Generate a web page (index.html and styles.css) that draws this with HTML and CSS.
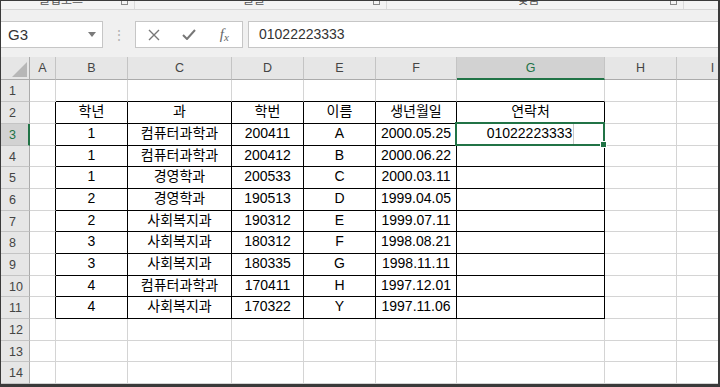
FILE: index.html
```html
<!DOCTYPE html>
<html lang="ko">
<head>
    <meta charset="UTF-8">
    <title>학생 명단</title>
    <link rel="stylesheet" href="styles.css">
</head>
<body>
    <div class="window">
        <div class="ribbon">
            <div class="group g1"><span class="glabel">클립보드</span><span class="launcher"></span></div>
            <div class="group g2"><span class="glabel">글꼴</span><span class="launcher"></span></div>
            <div class="group g3"><span class="glabel">맞춤</span><span class="launcher"></span></div>
        </div>

        <div class="formula-bar">
            <div class="namebox">
                <span>G3</span>
                <svg class="dd" width="8" height="5" viewBox="0 0 8 5"><path d="M0 0h8L4 5z" fill="#7a7a7a"/></svg>
            </div>
            <div class="grip">⋮</div>
            <div class="fx-buttons">
                <span class="btn">
                    <svg width="12" height="12" viewBox="0 0 12 12"><path d="M1 1l10 10M11 1L1 11" stroke="#777" stroke-width="1.4"/></svg>
                </span>
                <span class="btn">
                    <svg width="14" height="11" viewBox="0 0 14 11"><path d="M1 6l4 4L13 1" stroke="#777" stroke-width="2" fill="none"/></svg>
                </span>
                <span class="btn fx"><i>f</i><i class="x">x</i></span>
            </div>
            <div class="formula-input">01022223333</div>
        </div>

        <div class="sheet">
            <!-- 열 머리글 -->
            <div class="c corner"><svg width="15" height="15" viewBox="0 0 15 15"><path d="M15 0v15H0z" fill="#b7b7b7"/></svg></div>
            <div class="c ch">A</div>
            <div class="c ch">B</div>
            <div class="c ch">C</div>
            <div class="c ch">D</div>
            <div class="c ch">E</div>
            <div class="c ch">F</div>
            <div class="c ch sel">G</div>
            <div class="c ch">H</div>
            <div class="c ch">I</div>

            <!-- 1 -->
            <div class="c rh">1</div>
            <div class="c"></div>
            <div class="c tb"></div>
            <div class="c tb"></div>
            <div class="c tb"></div>
            <div class="c tb"></div>
            <div class="c tb"></div>
            <div class="c tb"></div>
            <div class="c"></div>
            <div class="c"></div>

            <!-- 2 -->
            <div class="c rh">2</div>
            <div class="c lb"></div>
            <div class="c d">학년</div>
            <div class="c d">과</div>
            <div class="c d">학번</div>
            <div class="c d">이름</div>
            <div class="c d">생년월일</div>
            <div class="c d">연락처</div>
            <div class="c"></div>
            <div class="c"></div>

            <!-- 3 -->
            <div class="c rh sel">3</div>
            <div class="c lb"></div>
            <div class="c d">1</div>
            <div class="c d">컴퓨터과학과</div>
            <div class="c d">200411</div>
            <div class="c d">A</div>
            <div class="c d">2000.05.25</div>
            <div class="c d active"><span class="val">01022223333</span></div>
            <div class="c"></div>
            <div class="c"></div>

            <!-- 4 -->
            <div class="c rh">4</div>
            <div class="c lb"></div>
            <div class="c d">1</div>
            <div class="c d">컴퓨터과학과</div>
            <div class="c d">200412</div>
            <div class="c d">B</div>
            <div class="c d">2000.06.22</div>
            <div class="c d"></div>
            <div class="c"></div>
            <div class="c"></div>

            <!-- 5 -->
            <div class="c rh">5</div>
            <div class="c lb"></div>
            <div class="c d">1</div>
            <div class="c d">경영학과</div>
            <div class="c d">200533</div>
            <div class="c d">C</div>
            <div class="c d">2000.03.11</div>
            <div class="c d"></div>
            <div class="c"></div>
            <div class="c"></div>

            <!-- 6 -->
            <div class="c rh">6</div>
            <div class="c lb"></div>
            <div class="c d">2</div>
            <div class="c d">경영학과</div>
            <div class="c d">190513</div>
            <div class="c d">D</div>
            <div class="c d">1999.04.05</div>
            <div class="c d"></div>
            <div class="c"></div>
            <div class="c"></div>

            <!-- 7 -->
            <div class="c rh">7</div>
            <div class="c lb"></div>
            <div class="c d">2</div>
            <div class="c d">사회복지과</div>
            <div class="c d">190312</div>
            <div class="c d">E</div>
            <div class="c d">1999.07.11</div>
            <div class="c d"></div>
            <div class="c"></div>
            <div class="c"></div>

            <!-- 8 -->
            <div class="c rh">8</div>
            <div class="c lb"></div>
            <div class="c d">3</div>
            <div class="c d">사회복지과</div>
            <div class="c d">180312</div>
            <div class="c d">F</div>
            <div class="c d">1998.08.21</div>
            <div class="c d"></div>
            <div class="c"></div>
            <div class="c"></div>

            <!-- 9 -->
            <div class="c rh">9</div>
            <div class="c lb"></div>
            <div class="c d">3</div>
            <div class="c d">사회복지과</div>
            <div class="c d">180335</div>
            <div class="c d">G</div>
            <div class="c d">1998.11.11</div>
            <div class="c d"></div>
            <div class="c"></div>
            <div class="c"></div>

            <!-- 10 -->
            <div class="c rh">10</div>
            <div class="c lb"></div>
            <div class="c d">4</div>
            <div class="c d">컴퓨터과학과</div>
            <div class="c d">170411</div>
            <div class="c d">H</div>
            <div class="c d">1997.12.01</div>
            <div class="c d"></div>
            <div class="c"></div>
            <div class="c"></div>

            <!-- 11 -->
            <div class="c rh">11</div>
            <div class="c lb"></div>
            <div class="c d">4</div>
            <div class="c d">사회복지과</div>
            <div class="c d">170322</div>
            <div class="c d">Y</div>
            <div class="c d">1997.11.06</div>
            <div class="c d"></div>
            <div class="c"></div>
            <div class="c"></div>

            <!-- 12 ~ 14 -->
            <div class="c rh">12</div>
            <div class="c"></div><div class="c"></div><div class="c"></div><div class="c"></div>
            <div class="c"></div><div class="c"></div><div class="c"></div><div class="c"></div><div class="c"></div>

            <div class="c rh">13</div>
            <div class="c"></div><div class="c"></div><div class="c"></div><div class="c"></div>
            <div class="c"></div><div class="c"></div><div class="c"></div><div class="c"></div><div class="c"></div>

            <div class="c rh">14</div>
            <div class="c"></div><div class="c"></div><div class="c"></div><div class="c"></div>
            <div class="c"></div><div class="c"></div><div class="c"></div><div class="c"></div><div class="c"></div>
        </div>
    </div>
</body>
</html>
```

FILE: styles.css
```css
* {
    box-sizing: border-box;
}

body {
    margin: 0;
    font-family: "Liberation Sans", "Noto Sans CJK KR", sans-serif;
    background: #fff;
}

.window {
    width: 720px;
    height: 387px;
    border: solid #3a3a3a;
    border-width: 1px 2px 3px 1px;
    background: #f0f0f0;
    overflow: hidden;
}

/* 리본 아래쪽 (잘린 그룹 이름) */
.ribbon {
    height: 9px;
    display: flex;
    background: #f3f3f3;
    border-bottom: 1px solid #d6d6d6;
    overflow: hidden;
}

.group {
    display: flex;
    align-items: flex-start;
    border-right: 1px solid #dadada;
}

.g1 { width: 134px; }
.g2 { width: 252px; }
.g3 { width: 297px; }

.glabel {
    flex: 1;
    text-align: center;
    font-family: "Noto Sans CJK KR", sans-serif;
    font-size: 12px;
    line-height: 12px;
    margin-top: -8px;
    color: #555;
}

.launcher {
    width: 7px;
    height: 7px;
    border: 1px solid #8a8a8a;
    margin: -3px 6px 0 0;
}

/* 수식 입력줄 */
.formula-bar {
    height: 47px;
    display: flex;
    align-items: flex-start;
    padding-top: 11px;
}

.namebox {
    width: 102px;
    height: 27px;
    background: #fff;
    border: 1px solid #c6c6c6;
    border-left: none;
    display: flex;
    align-items: center;
    justify-content: space-between;
    padding: 0 6px 0 7px;
    font-size: 15px;
    color: #333;
}

.grip {
    width: 32px;
    height: 27px;
    display: flex;
    align-items: center;
    justify-content: center;
    color: #b4b4b4;
    font-size: 14px;
}

.fx-buttons {
    width: 108px;
    height: 27px;
    display: flex;
    background: #fff;
    border: 1px solid #c6c6c6;
}

.btn {
    width: 36px;
    display: flex;
    align-items: center;
    justify-content: center;
}

.fx {
    font-family: "Liberation Serif", serif;
    color: #666;
    font-size: 15px;
}

.fx .x {
    font-size: 11px;
    margin-top: 4px;
}

.formula-input {
    flex: 1;
    height: 27px;
    margin-left: 5px;
    background: #fff;
    border: 1px solid #c6c6c6;
    border-right: none;
    padding-left: 10px;
    font-size: 14px;
    line-height: 25px;
    color: #333;
}

/* 시트 */
.sheet {
    display: grid;
    grid-template-columns: 29px 26px 72px 104px 72px 72px 81px 148px 72px 72px;
    grid-template-rows: 23px 22px 22px 22px 21px 22px 22px 21px 22px 22px 21px 22px 22px 21px 22px;
    background: #fff;
}

.c {
    border-right: 1px solid #d4d4d4;
    border-bottom: 1px solid #d4d4d4;
    display: flex;
    align-items: center;
    justify-content: center;
    font-size: 14px;
    line-height: 18px;
    padding-bottom: 3px;
    color: #000;
    white-space: nowrap;
    overflow: hidden;
}

.corner {
    background: #e6e6e6;
    border-color: #ababab;
    align-items: flex-end;
    justify-content: flex-end;
    padding: 0 2px 2px 0;
}

.ch {
    background: #e6e6e6;
    border-right-color: #c4c4c4;
    border-bottom-color: #ababab;
    color: #444;
    font-size: 12.5px;
    padding-bottom: 1px;
}

.rh {
    background: #e6e6e6;
    border-right-color: #ababab;
    border-bottom-color: #c4c4c4;
    color: #444;
    font-size: 12.5px;
    justify-content: flex-start;
    padding: 1px 0 0 8px;
}

.ch.sel {
    background: #d2d2d2;
    border-bottom: 2px solid #217346;
    color: #217346;
    padding-bottom: 0;
}

.rh.sel {
    background: #d2d2d2;
    border-right: 2px solid #217346;
    color: #217346;
}

/* 표 테두리 */
.d {
    border-right-color: #000;
    border-bottom-color: #000;
}

.lb {
    border-right-color: #000;
}

.tb {
    border-bottom-color: #000;
}

/* 선택된 셀 */
.active {
    position: relative;
    overflow: visible;
    align-items: stretch;
    padding-bottom: 0;
}

.active .val {
    display: flex;
    align-items: center;
    padding-bottom: 3px;
    padding-right: 1px;
    border-right: 1px solid #c8c8c8;
}

.active::after {
    content: "";
    position: absolute;
    left: -2px;
    top: -2px;
    right: -1px;
    bottom: -1px;
    border: 2px solid #217346;
}

.active::before {
    content: "";
    position: absolute;
    right: -3px;
    bottom: -3px;
    width: 5px;
    height: 5px;
    background: #217346;
    border: 1px solid #fff;
    z-index: 1;
}
```
